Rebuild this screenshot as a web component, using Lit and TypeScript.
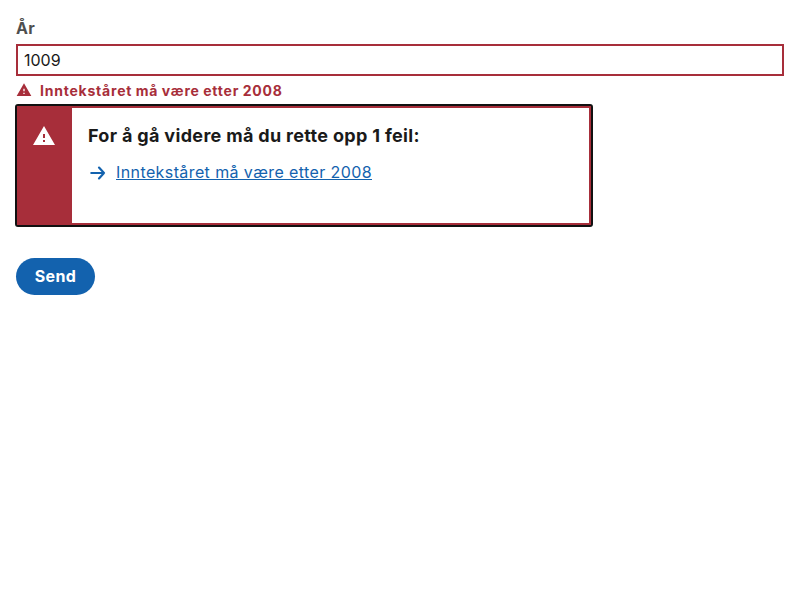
import { LitElement, html, css } from "lit";
import { customElement } from "lit/decorators.js";

@customElement("app-root")
export class AppRoot extends LitElement {
  static styles = css`
    :host { display: block; box-sizing: border-box; min-height: 600px; padding: 16px; background: #fff; font-family: Inter, sans-serif; font-size: 16px; color: #1a1a1a; }
    * { box-sizing: border-box; }
    .label { display: block; height: 24px; line-height: 24px; margin-bottom: 4px; font-weight: 650; letter-spacing: 0.3px; color: #4f4f4f; }
    .input { display: block; width: 100%; height: 32px; padding: 0 6px; margin: 0; border: 2px solid #a72e3a; background: #fff; font: 400 16px/28px Inter, sans-serif; color: #1a1a1a; border-radius: 0; outline: none; }
    .error { display: flex; align-items: center; gap: 8px; height: 20px; margin-top: 5px; margin-bottom: 3px; font-size: 14px; font-weight: 700; line-height: 20px; color: #a72e3a; }
    .error span { letter-spacing: 0.78px; word-spacing: -0.5px; }
    .error svg { width: 16px; height: 16px; margin-top: -2px; }
    .summary { width: 578px; height: 123px; margin-left: -1px; border: 2px solid #111; border-radius: 3px; background: #a72e3a; }
    .inner { display: flex; height: 100%; border: 2px solid #a72e3a; }
    .side { width: 53px; padding: 16px 13px; background: #a72e3a; color: #fff; }
    .side svg { display: block; width: 24px; height: 24px; }
    .content { flex: 1; padding: 14px 16px; background: #fff; }
    h2 { margin: 0 0 8px; font-size: 18px; line-height: 28px; font-weight: 700; letter-spacing: 0.32px; white-space: nowrap; }
    .link { display: flex; align-items: center; gap: 8px; line-height: 28px; color: #1362ae; }
    .link svg { width: 20px; height: 20px; }
    .link a { color: inherit; text-decoration: underline; font-weight: 430; letter-spacing: 0.4px; }
    .send { display: block; margin-top: 31px; width: 79px; height: 37px; padding: 0; border: 0; border-radius: 19px; background: #1362ae; color: #fff; font: 700 16px/37px Inter, sans-serif; letter-spacing: 0.4px; }
  `;

  render() {
    const warning = html`<svg viewBox="0 0 24 24"><path fill="currentColor" d="M1 21h22L12 2 1 21zm12-3h-2v-2h2v2zm0-4h-2v-4h2v4z"/></svg>`;
    return html`
      <label class="label" for="year">År</label>
      <input class="input" id="year" value="1009" />
      <div class="error">${warning}<span>Inntekståret må være etter 2008</span></div>
      <section class="summary">
        <div class="inner">
          <div class="side">${warning}</div>
          <div class="content">
            <h2>For å gå videre må du rette opp 1 feil:</h2>
            <div class="link">
              <svg viewBox="0 0 20 20"><path d="M3.3 11h12.7M11 5.6l5 5.4-5 5.4" fill="none" stroke="currentColor" stroke-width="2.2" stroke-linecap="round" stroke-linejoin="round"/></svg>
              <a href="#year">Inntekståret må være etter 2008</a>
            </div>
          </div>
        </div>
      </section>
      <button class="send">Send</button>
    `;
  }
}
